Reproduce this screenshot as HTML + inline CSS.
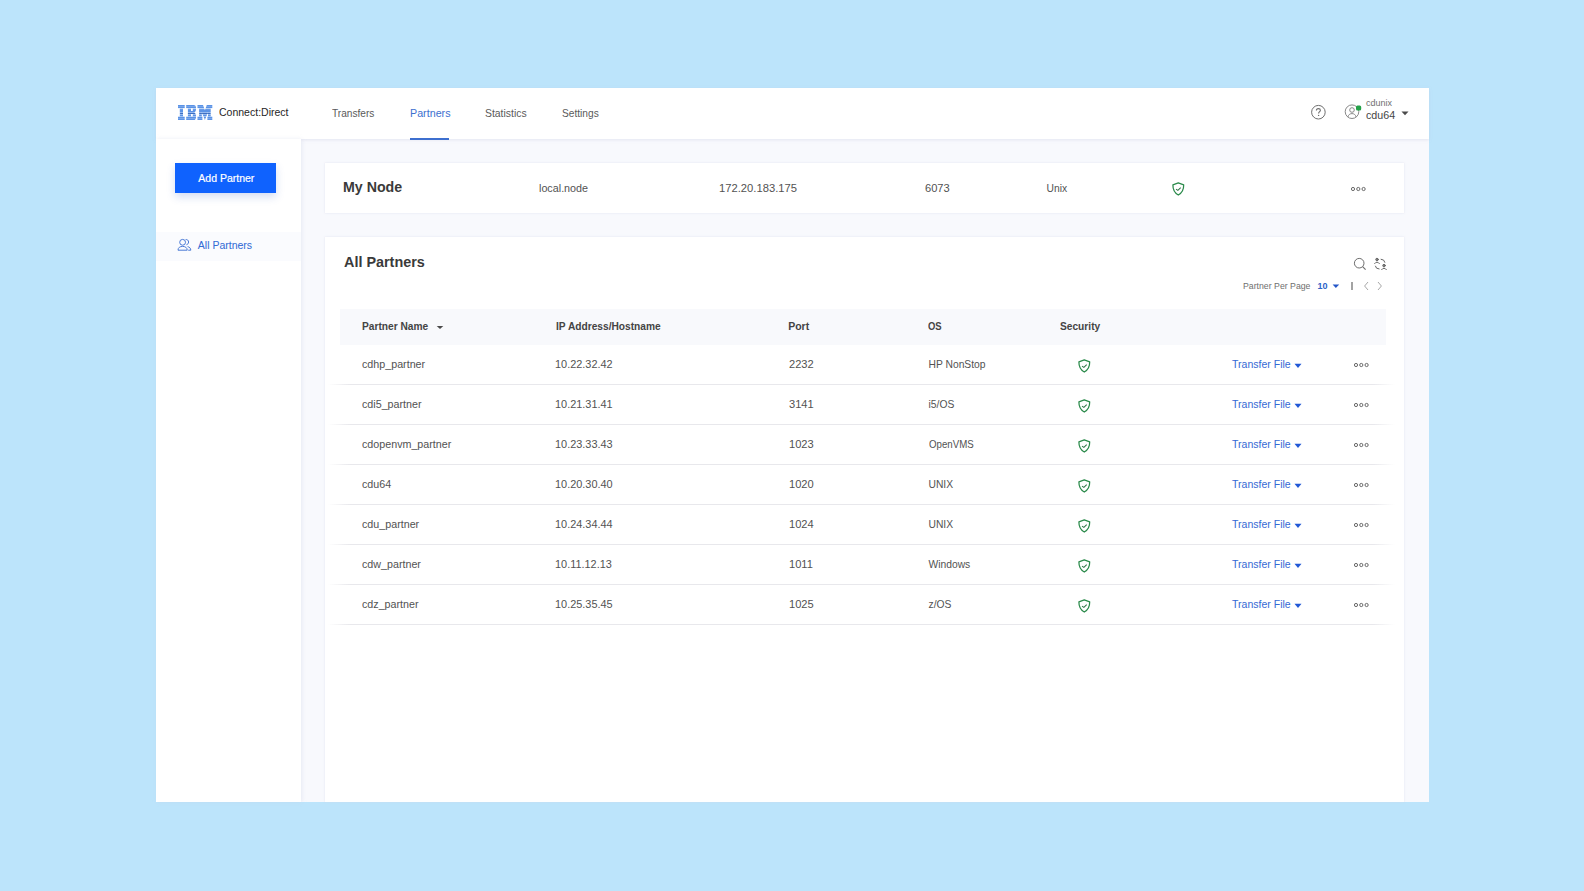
<!DOCTYPE html>
<html><head><meta charset="utf-8">
<style>
html,body{margin:0;padding:0;}
body{width:1584px;height:891px;background:#BCE4FB;position:relative;overflow:hidden;font-family:"Liberation Sans",sans-serif;}
.a{position:absolute;}
.t{position:absolute;white-space:nowrap;line-height:1;}
</style></head>
<body>
<div class="a" style="left:156px;top:88px;width:1273px;height:714px;background:#fff"></div>
<div class="a" style="left:301px;top:139px;width:1128px;height:663px;background:#F8F9FD"></div>
<div class="a" style="left:156px;top:88px;width:1273px;height:51px;background:#fff;box-shadow:0 1px 3px rgba(190,196,220,0.35)"></div>
<div class="a" style="left:156px;top:139px;width:145px;height:663px;background:#fff;box-shadow:1px 0 4px rgba(200,205,225,0.35)"></div>
<div class="a" style="left:325px;top:163px;width:1079px;height:50px;background:#fff;box-shadow:0 0 2px rgba(210,214,232,0.6)"></div>
<div class="a" style="left:325px;top:237px;width:1079px;height:565px;background:#fff;box-shadow:0 0 2px rgba(210,214,232,0.6)"></div>
<svg class="a" style="left:178px;top:105px" width="35" height="15" viewBox="0 0 35 15">
<g fill="#5B93E6" fill-rule="evenodd">
<path d="M0 0 H6.7 V3.3 H5 V11.6 H6.7 V15 H0 V11.6 H1.8 V3.3 H0 Z"/>
<path d="M8.2 0 H15.6 Q18 0 18 2.8 V4.6 Q18 6.6 16.4 7.5 Q18 8.4 18 10.4 V12.2 Q18 15 15.6 15 H8.2 V11.6 H9.9 V3.3 H8.2 Z M13 3.3 H14.8 V6 H13 Z M13 9 H14.8 V11.6 H13 Z"/>
<path d="M19.5 0 H25 L26.9 5.2 L28.8 0 H34.3 V3.3 H32.7 V11.6 H34.3 V15 H29.4 V11.6 H30 V7.2 L26.9 15 L23.8 7.2 V11.6 H24.4 V15 H19.5 V11.6 H21.1 V3.3 H19.5 Z"/>
</g>
<g fill="#fff"><rect x="0" y="3.3" width="35" height="0.8" opacity="0.85"/><rect x="0" y="7.3" width="35" height="0.6" opacity="0.6"/><rect x="0" y="9.4" width="35" height="0.6" opacity="0.6"/><rect x="0" y="11.1" width="35" height="0.6" opacity="0.75"/><rect x="0" y="13.3" width="35" height="0.5" opacity="0.4"/><rect x="0" y="1.5" width="35" height="0.5" opacity="0.35"/></g>
<g fill="#2F5FB0" opacity="0.75"><rect x="2.2" y="8.1" width="2.8" height="0.9"/><rect x="9.9" y="8.1" width="7.2" height="0.9"/><rect x="21.4" y="8.1" width="11" height="0.9"/></g>
</svg>
<div class="t" style="left:219.3px;top:107.0px;font-size:11px;color:#262626;font-weight:400;transform:scaleX(0.955);transform-origin:0 0;">Connect:Direct</div>
<div class="t" style="left:332.0px;top:108.3px;font-size:11px;color:#5a5a5a;font-weight:400;transform:scaleX(0.92);transform-origin:0 0;">Transfers</div>
<div class="t" style="left:410.0px;top:108.3px;font-size:11px;color:#3D6FCF;font-weight:400;transform:scaleX(0.975);transform-origin:0 0;">Partners</div>
<div class="a" style="left:410px;top:138px;width:39px;height:2px;background:#3D6FCF"></div>
<div class="t" style="left:484.8px;top:108.3px;font-size:11px;color:#5a5a5a;font-weight:400;transform:scaleX(0.945);transform-origin:0 0;">Statistics</div>
<div class="t" style="left:562.0px;top:108.3px;font-size:11px;color:#5a5a5a;font-weight:400;transform:scaleX(0.925);transform-origin:0 0;">Settings</div>
<svg class="a" style="left:1310px;top:104px" width="17" height="17" viewBox="0 0 17 17">
<circle cx="8.4" cy="8.2" r="6.8" fill="none" stroke="#6f6f6f" stroke-width="1"/>
<path d="M6.4 6.6 C6.4 5.3 7.3 4.6 8.4 4.6 C9.6 4.6 10.4 5.4 10.4 6.4 C10.4 7.6 8.6 7.8 8.6 9.4" fill="none" stroke="#6f6f6f" stroke-width="1.1"/>
<circle cx="8.6" cy="11.4" r="0.7" fill="#6f6f6f"/>
</svg>
<svg class="a" style="left:1343px;top:103px" width="20" height="17" viewBox="0 0 20 17">
<circle cx="9" cy="8.7" r="6.8" fill="none" stroke="#7a7a7a" stroke-width="0.9"/>
<circle cx="9" cy="7" r="2.3" fill="none" stroke="#7a7a7a" stroke-width="0.9"/>
<path d="M4.8 14 C5.6 11.6 7 10.6 9 10.6 C11 10.6 12.4 11.6 13.2 14" fill="none" stroke="#7a7a7a" stroke-width="0.9"/>
<rect x="13" y="2.4" width="5.2" height="5.2" rx="1.5" fill="#24A148"/>
</svg>
<div class="t" style="left:1366.0px;top:99.0px;font-size:9px;color:#707070;font-weight:400;">cdunix</div>
<div class="t" style="left:1366.0px;top:109.5px;font-size:10.5px;color:#454545;font-weight:400;transform:scaleX(1.02);transform-origin:0 0;">cdu64</div>
<svg class="a" style="left:1401px;top:111px" width="8" height="5" viewBox="0 0 8 5"><path d="M0.5 0.5 L7.5 0.5 L4 4.3 Z" fill="#4a4a4a"/></svg>
<div class="a" style="left:175px;top:163px;width:101px;height:30px;background:#0F62FE;box-shadow:0 4px 8px rgba(60,100,200,0.22)"></div>
<div class="t" style="left:198.3px;top:173.1px;font-size:10.5px;color:#ffffff;font-weight:400;-webkit-text-stroke:0.2px #fff;">Add Partner</div>
<div class="a" style="left:156px;top:232px;width:145px;height:29px;background:#FAFBFE"></div>
<svg class="a" style="left:177px;top:238px" width="15" height="14" viewBox="0 0 15 14">
<circle cx="5.6" cy="4.3" r="2.9" fill="none" stroke="#4A7AD6" stroke-width="1"/>
<path d="M1 12.2 C1 9.6 3 8.4 5.6 8.4 C8.2 8.4 10.2 9.6 10.2 12.2 Z" fill="none" stroke="#4A7AD6" stroke-width="1"/>
<path d="M8.6 1.6 C10.2 1.2 11.6 2.4 11.6 4 C11.6 5.4 10.6 6.5 9.4 6.8" fill="none" stroke="#4A7AD6" stroke-width="1"/>
<path d="M10.6 8.6 C12.4 9 13.8 10.2 13.8 12.2 L11.2 12.2" fill="none" stroke="#4A7AD6" stroke-width="1"/>
</svg>
<div class="t" style="left:197.8px;top:240.2px;font-size:10.5px;color:#346CD6;font-weight:400;-webkit-text-stroke:0.05px #346CD6;">All Partners</div>
<div class="t" style="left:342.6px;top:179.2px;font-size:15px;color:#3a3a3a;font-weight:700;transform:scaleX(0.947);transform-origin:0 0;">My Node</div>
<div class="t" style="left:538.8px;top:183.7px;font-size:10.3px;color:#525252;font-weight:400;transform:scaleX(1.045);transform-origin:0 0;">local.node</div>
<div class="t" style="left:719.2px;top:184.0px;font-size:10.3px;color:#525252;font-weight:400;transform:scaleX(1.09);transform-origin:0 0;">172.20.183.175</div>
<div class="t" style="left:924.6px;top:184.0px;font-size:10.3px;color:#525252;font-weight:400;transform:scaleX(1.08);transform-origin:0 0;">6073</div>
<div class="t" style="left:1046.5px;top:184.0px;font-size:10.3px;color:#525252;font-weight:400;">Unix</div>
<svg class="a" style="left:1171px;top:182px" width="14" height="14" viewBox="0 0 14 14">
<path d="M7.3 0.8 L12.7 2.8 C12.8 7.6 11 11 7.3 13 C3.6 11 1.8 7.6 1.9 2.8 Z" fill="none" stroke="#2A8A4A" stroke-width="1.25" stroke-linejoin="round"/>
<path d="M5 7.1 L6.9 8.4 L9.7 5.7" fill="none" stroke="#2F7447" stroke-width="1.05"/>
</svg>
<svg class="a" style="left:1350px;top:186px" width="18" height="6" viewBox="0 0 18 6">
<circle cx="3" cy="3" r="1.6" fill="none" stroke="#6a6a6a" stroke-width="1"/>
<circle cx="8.3" cy="3" r="1.6" fill="none" stroke="#6a6a6a" stroke-width="1"/>
<circle cx="13.6" cy="3" r="1.6" fill="none" stroke="#6a6a6a" stroke-width="1"/>
</svg>
<div class="t" style="left:343.6px;top:253.9px;font-size:15px;color:#3a3a3a;font-weight:700;transform:scaleX(0.96);transform-origin:0 0;">All Partners</div>
<svg class="a" style="left:1353px;top:257px" width="14" height="14" viewBox="0 0 14 14">
<circle cx="6.2" cy="6.2" r="4.8" fill="none" stroke="#6f6f6f" stroke-width="1"/>
<path d="M9.6 9.6 L12.6 12.6" stroke="#6f6f6f" stroke-width="1.1"/>
</svg>
<svg class="a" style="left:1373px;top:257px" width="15" height="15" viewBox="0 0 15 15">
<g fill="none" stroke="#666" stroke-width="1" stroke-linecap="round">
<circle cx="4" cy="2.5" r="1.25" fill="#888"/>
<path d="M1.6 6.6 Q4 3.4 6.4 6.6"/>
<path d="M8.1 2.2 Q11.4 2.3 11.9 5.3"/>
<path d="M2.4 9.2 Q2.7 11.9 6.1 12"/>
<circle cx="11" cy="8.6" r="1.25" fill="#888"/>
<path d="M8.6 12.7 Q11 9.5 13.4 12.7"/>
</g>
</svg>
<div class="t" style="left:1242.9px;top:281.7px;font-size:9px;color:#6f6f6f;font-weight:400;transform:scaleX(0.97);transform-origin:0 0;">Partner Per Page</div>
<div class="t" style="left:1317.5px;top:281.7px;font-size:9px;color:#2D62C8;font-weight:700;">10</div>
<svg class="a" style="left:1332px;top:284px" width="8" height="5" viewBox="0 0 8 5"><path d="M0.6 0.6 L7.2 0.6 L3.9 4 Z" fill="#2456C8"/></svg>
<div class="a" style="left:1351px;top:282px;width:1.5px;height:8px;background:#a3a3a3"></div>
<svg class="a" style="left:1362px;top:281px" width="22" height="10" viewBox="0 0 22 10"><path d="M6 1 L2.6 5 L6 9" fill="none" stroke="#a8a8a8" stroke-width="1"/><path d="M16 1 L19.4 5 L16 9" fill="none" stroke="#a8a8a8" stroke-width="1"/></svg>
<div class="a" style="left:340px;top:309px;width:1046px;height:36px;background:#F8F9FC"></div>
<div class="t" style="left:361.5px;top:321.4px;font-size:10.5px;color:#444444;font-weight:700;transform:scaleX(0.97);transform-origin:0 0;">Partner Name</div>
<svg class="a" style="left:436px;top:325px" width="8" height="5" viewBox="0 0 8 5"><path d="M0.7 0.9 L7.3 0.9 L4 4.1 Z" fill="#4a4a4a"/></svg>
<div class="t" style="left:555.7px;top:321.4px;font-size:10.5px;color:#444444;font-weight:700;transform:scaleX(0.97);transform-origin:0 0;">IP Address/Hostname</div>
<div class="t" style="left:788.2px;top:321.4px;font-size:10.5px;color:#444444;font-weight:700;">Port</div>
<div class="t" style="left:928.2px;top:321.4px;font-size:10.5px;color:#444444;font-weight:700;transform:scaleX(0.9);transform-origin:0 0;">OS</div>
<div class="t" style="left:1060.4px;top:321.4px;font-size:10.5px;color:#444444;font-weight:700;transform:scaleX(0.97);transform-origin:0 0;">Security</div>
<div class="t" style="left:362.3px;top:360.0px;font-size:10.3px;color:#525252;font-weight:400;transform:scaleX(1.04);transform-origin:0 0;">cdhp_partner</div>
<div class="t" style="left:554.6px;top:360.0px;font-size:10.3px;color:#525252;font-weight:400;transform:scaleX(1.06);transform-origin:0 0;">10.22.32.42</div>
<div class="t" style="left:788.5px;top:360.0px;font-size:10.3px;color:#525252;font-weight:400;transform:scaleX(1.08);transform-origin:0 0;">2232</div>
<div class="t" style="left:928.5px;top:360.0px;font-size:10.3px;color:#525252;font-weight:400;">HP NonStop</div>
<svg class="a" style="left:1077.2px;top:358.6px" width="14" height="14" viewBox="0 0 14 14">
<path d="M7.3 0.8 L12.7 2.8 C12.8 7.6 11 11 7.3 13 C3.6 11 1.8 7.6 1.9 2.8 Z" fill="none" stroke="#2A8A4A" stroke-width="1.25" stroke-linejoin="round"/>
<path d="M5 7.1 L6.9 8.4 L9.7 5.7" fill="none" stroke="#2F7447" stroke-width="1.05"/>
</svg>
<div class="t" style="left:1232.1px;top:358.8px;font-size:10.5px;color:#3469D4;font-weight:400;">Transfer File</div>
<svg class="a" style="left:1293.5px;top:363px" width="8" height="6" viewBox="0 0 8 6"><path d="M0.5 0.8 L7.5 0.8 L4 5 Z" fill="#2158D6"/></svg>
<svg class="a" style="left:1353.0px;top:362.2px" width="18" height="6" viewBox="0 0 18 6">
<circle cx="3" cy="3" r="1.6" fill="none" stroke="#6a6a6a" stroke-width="1"/>
<circle cx="8.3" cy="3" r="1.6" fill="none" stroke="#6a6a6a" stroke-width="1"/>
<circle cx="13.6" cy="3" r="1.6" fill="none" stroke="#6a6a6a" stroke-width="1"/>
</svg>
<div class="a" style="left:328px;top:384px;width:1067px;height:1px;background:linear-gradient(90deg, rgba(232,232,236,0) 0px, #E8E8EC 22px, #E8E8EC 1045px, rgba(232,232,236,0) 1067px)"></div>
<div class="t" style="left:362.3px;top:400.0px;font-size:10.3px;color:#525252;font-weight:400;transform:scaleX(1.04);transform-origin:0 0;">cdi5_partner</div>
<div class="t" style="left:554.6px;top:400.0px;font-size:10.3px;color:#525252;font-weight:400;transform:scaleX(1.06);transform-origin:0 0;">10.21.31.41</div>
<div class="t" style="left:788.5px;top:400.0px;font-size:10.3px;color:#525252;font-weight:400;transform:scaleX(1.08);transform-origin:0 0;">3141</div>
<div class="t" style="left:928.5px;top:400.0px;font-size:10.3px;color:#525252;font-weight:400;">i5/OS</div>
<svg class="a" style="left:1077.2px;top:398.6px" width="14" height="14" viewBox="0 0 14 14">
<path d="M7.3 0.8 L12.7 2.8 C12.8 7.6 11 11 7.3 13 C3.6 11 1.8 7.6 1.9 2.8 Z" fill="none" stroke="#2A8A4A" stroke-width="1.25" stroke-linejoin="round"/>
<path d="M5 7.1 L6.9 8.4 L9.7 5.7" fill="none" stroke="#2F7447" stroke-width="1.05"/>
</svg>
<div class="t" style="left:1232.1px;top:398.8px;font-size:10.5px;color:#3469D4;font-weight:400;">Transfer File</div>
<svg class="a" style="left:1293.5px;top:403px" width="8" height="6" viewBox="0 0 8 6"><path d="M0.5 0.8 L7.5 0.8 L4 5 Z" fill="#2158D6"/></svg>
<svg class="a" style="left:1353.0px;top:402.2px" width="18" height="6" viewBox="0 0 18 6">
<circle cx="3" cy="3" r="1.6" fill="none" stroke="#6a6a6a" stroke-width="1"/>
<circle cx="8.3" cy="3" r="1.6" fill="none" stroke="#6a6a6a" stroke-width="1"/>
<circle cx="13.6" cy="3" r="1.6" fill="none" stroke="#6a6a6a" stroke-width="1"/>
</svg>
<div class="a" style="left:328px;top:424px;width:1067px;height:1px;background:linear-gradient(90deg, rgba(232,232,236,0) 0px, #E8E8EC 22px, #E8E8EC 1045px, rgba(232,232,236,0) 1067px)"></div>
<div class="t" style="left:362.3px;top:440.0px;font-size:10.3px;color:#525252;font-weight:400;transform:scaleX(1.04);transform-origin:0 0;">cdopenvm_partner</div>
<div class="t" style="left:554.6px;top:440.0px;font-size:10.3px;color:#525252;font-weight:400;transform:scaleX(1.06);transform-origin:0 0;">10.23.33.43</div>
<div class="t" style="left:788.5px;top:440.0px;font-size:10.3px;color:#525252;font-weight:400;transform:scaleX(1.08);transform-origin:0 0;">1023</div>
<div class="t" style="left:928.5px;top:440.0px;font-size:10.3px;color:#525252;font-weight:400;transform:scaleX(0.94);transform-origin:0 0;">OpenVMS</div>
<svg class="a" style="left:1077.2px;top:438.6px" width="14" height="14" viewBox="0 0 14 14">
<path d="M7.3 0.8 L12.7 2.8 C12.8 7.6 11 11 7.3 13 C3.6 11 1.8 7.6 1.9 2.8 Z" fill="none" stroke="#2A8A4A" stroke-width="1.25" stroke-linejoin="round"/>
<path d="M5 7.1 L6.9 8.4 L9.7 5.7" fill="none" stroke="#2F7447" stroke-width="1.05"/>
</svg>
<div class="t" style="left:1232.1px;top:438.8px;font-size:10.5px;color:#3469D4;font-weight:400;">Transfer File</div>
<svg class="a" style="left:1293.5px;top:443px" width="8" height="6" viewBox="0 0 8 6"><path d="M0.5 0.8 L7.5 0.8 L4 5 Z" fill="#2158D6"/></svg>
<svg class="a" style="left:1353.0px;top:442.2px" width="18" height="6" viewBox="0 0 18 6">
<circle cx="3" cy="3" r="1.6" fill="none" stroke="#6a6a6a" stroke-width="1"/>
<circle cx="8.3" cy="3" r="1.6" fill="none" stroke="#6a6a6a" stroke-width="1"/>
<circle cx="13.6" cy="3" r="1.6" fill="none" stroke="#6a6a6a" stroke-width="1"/>
</svg>
<div class="a" style="left:328px;top:464px;width:1067px;height:1px;background:linear-gradient(90deg, rgba(232,232,236,0) 0px, #E8E8EC 22px, #E8E8EC 1045px, rgba(232,232,236,0) 1067px)"></div>
<div class="t" style="left:362.3px;top:480.0px;font-size:10.3px;color:#525252;font-weight:400;transform:scaleX(1.04);transform-origin:0 0;">cdu64</div>
<div class="t" style="left:554.6px;top:480.0px;font-size:10.3px;color:#525252;font-weight:400;transform:scaleX(1.06);transform-origin:0 0;">10.20.30.40</div>
<div class="t" style="left:788.5px;top:480.0px;font-size:10.3px;color:#525252;font-weight:400;transform:scaleX(1.08);transform-origin:0 0;">1020</div>
<div class="t" style="left:928.5px;top:480.0px;font-size:10.3px;color:#525252;font-weight:400;">UNIX</div>
<svg class="a" style="left:1077.2px;top:478.6px" width="14" height="14" viewBox="0 0 14 14">
<path d="M7.3 0.8 L12.7 2.8 C12.8 7.6 11 11 7.3 13 C3.6 11 1.8 7.6 1.9 2.8 Z" fill="none" stroke="#2A8A4A" stroke-width="1.25" stroke-linejoin="round"/>
<path d="M5 7.1 L6.9 8.4 L9.7 5.7" fill="none" stroke="#2F7447" stroke-width="1.05"/>
</svg>
<div class="t" style="left:1232.1px;top:478.8px;font-size:10.5px;color:#3469D4;font-weight:400;">Transfer File</div>
<svg class="a" style="left:1293.5px;top:483px" width="8" height="6" viewBox="0 0 8 6"><path d="M0.5 0.8 L7.5 0.8 L4 5 Z" fill="#2158D6"/></svg>
<svg class="a" style="left:1353.0px;top:482.2px" width="18" height="6" viewBox="0 0 18 6">
<circle cx="3" cy="3" r="1.6" fill="none" stroke="#6a6a6a" stroke-width="1"/>
<circle cx="8.3" cy="3" r="1.6" fill="none" stroke="#6a6a6a" stroke-width="1"/>
<circle cx="13.6" cy="3" r="1.6" fill="none" stroke="#6a6a6a" stroke-width="1"/>
</svg>
<div class="a" style="left:328px;top:504px;width:1067px;height:1px;background:linear-gradient(90deg, rgba(232,232,236,0) 0px, #E8E8EC 22px, #E8E8EC 1045px, rgba(232,232,236,0) 1067px)"></div>
<div class="t" style="left:362.3px;top:520.0px;font-size:10.3px;color:#525252;font-weight:400;transform:scaleX(1.04);transform-origin:0 0;">cdu_partner</div>
<div class="t" style="left:554.6px;top:520.0px;font-size:10.3px;color:#525252;font-weight:400;transform:scaleX(1.06);transform-origin:0 0;">10.24.34.44</div>
<div class="t" style="left:788.5px;top:520.0px;font-size:10.3px;color:#525252;font-weight:400;transform:scaleX(1.08);transform-origin:0 0;">1024</div>
<div class="t" style="left:928.5px;top:520.0px;font-size:10.3px;color:#525252;font-weight:400;">UNIX</div>
<svg class="a" style="left:1077.2px;top:518.6px" width="14" height="14" viewBox="0 0 14 14">
<path d="M7.3 0.8 L12.7 2.8 C12.8 7.6 11 11 7.3 13 C3.6 11 1.8 7.6 1.9 2.8 Z" fill="none" stroke="#2A8A4A" stroke-width="1.25" stroke-linejoin="round"/>
<path d="M5 7.1 L6.9 8.4 L9.7 5.7" fill="none" stroke="#2F7447" stroke-width="1.05"/>
</svg>
<div class="t" style="left:1232.1px;top:518.8px;font-size:10.5px;color:#3469D4;font-weight:400;">Transfer File</div>
<svg class="a" style="left:1293.5px;top:523px" width="8" height="6" viewBox="0 0 8 6"><path d="M0.5 0.8 L7.5 0.8 L4 5 Z" fill="#2158D6"/></svg>
<svg class="a" style="left:1353.0px;top:522.2px" width="18" height="6" viewBox="0 0 18 6">
<circle cx="3" cy="3" r="1.6" fill="none" stroke="#6a6a6a" stroke-width="1"/>
<circle cx="8.3" cy="3" r="1.6" fill="none" stroke="#6a6a6a" stroke-width="1"/>
<circle cx="13.6" cy="3" r="1.6" fill="none" stroke="#6a6a6a" stroke-width="1"/>
</svg>
<div class="a" style="left:328px;top:544px;width:1067px;height:1px;background:linear-gradient(90deg, rgba(232,232,236,0) 0px, #E8E8EC 22px, #E8E8EC 1045px, rgba(232,232,236,0) 1067px)"></div>
<div class="t" style="left:362.3px;top:560.0px;font-size:10.3px;color:#525252;font-weight:400;transform:scaleX(1.04);transform-origin:0 0;">cdw_partner</div>
<div class="t" style="left:554.6px;top:560.0px;font-size:10.3px;color:#525252;font-weight:400;transform:scaleX(1.06);transform-origin:0 0;">10.11.12.13</div>
<div class="t" style="left:788.5px;top:560.0px;font-size:10.3px;color:#525252;font-weight:400;transform:scaleX(1.08);transform-origin:0 0;">1011</div>
<div class="t" style="left:928.5px;top:560.0px;font-size:10.3px;color:#525252;font-weight:400;">Windows</div>
<svg class="a" style="left:1077.2px;top:558.6px" width="14" height="14" viewBox="0 0 14 14">
<path d="M7.3 0.8 L12.7 2.8 C12.8 7.6 11 11 7.3 13 C3.6 11 1.8 7.6 1.9 2.8 Z" fill="none" stroke="#2A8A4A" stroke-width="1.25" stroke-linejoin="round"/>
<path d="M5 7.1 L6.9 8.4 L9.7 5.7" fill="none" stroke="#2F7447" stroke-width="1.05"/>
</svg>
<div class="t" style="left:1232.1px;top:558.8px;font-size:10.5px;color:#3469D4;font-weight:400;">Transfer File</div>
<svg class="a" style="left:1293.5px;top:563px" width="8" height="6" viewBox="0 0 8 6"><path d="M0.5 0.8 L7.5 0.8 L4 5 Z" fill="#2158D6"/></svg>
<svg class="a" style="left:1353.0px;top:562.2px" width="18" height="6" viewBox="0 0 18 6">
<circle cx="3" cy="3" r="1.6" fill="none" stroke="#6a6a6a" stroke-width="1"/>
<circle cx="8.3" cy="3" r="1.6" fill="none" stroke="#6a6a6a" stroke-width="1"/>
<circle cx="13.6" cy="3" r="1.6" fill="none" stroke="#6a6a6a" stroke-width="1"/>
</svg>
<div class="a" style="left:328px;top:584px;width:1067px;height:1px;background:linear-gradient(90deg, rgba(232,232,236,0) 0px, #E8E8EC 22px, #E8E8EC 1045px, rgba(232,232,236,0) 1067px)"></div>
<div class="t" style="left:362.3px;top:600.0px;font-size:10.3px;color:#525252;font-weight:400;transform:scaleX(1.04);transform-origin:0 0;">cdz_partner</div>
<div class="t" style="left:554.6px;top:600.0px;font-size:10.3px;color:#525252;font-weight:400;transform:scaleX(1.06);transform-origin:0 0;">10.25.35.45</div>
<div class="t" style="left:788.5px;top:600.0px;font-size:10.3px;color:#525252;font-weight:400;transform:scaleX(1.08);transform-origin:0 0;">1025</div>
<div class="t" style="left:928.5px;top:600.0px;font-size:10.3px;color:#525252;font-weight:400;">z/OS</div>
<svg class="a" style="left:1077.2px;top:598.6px" width="14" height="14" viewBox="0 0 14 14">
<path d="M7.3 0.8 L12.7 2.8 C12.8 7.6 11 11 7.3 13 C3.6 11 1.8 7.6 1.9 2.8 Z" fill="none" stroke="#2A8A4A" stroke-width="1.25" stroke-linejoin="round"/>
<path d="M5 7.1 L6.9 8.4 L9.7 5.7" fill="none" stroke="#2F7447" stroke-width="1.05"/>
</svg>
<div class="t" style="left:1232.1px;top:598.8px;font-size:10.5px;color:#3469D4;font-weight:400;">Transfer File</div>
<svg class="a" style="left:1293.5px;top:603px" width="8" height="6" viewBox="0 0 8 6"><path d="M0.5 0.8 L7.5 0.8 L4 5 Z" fill="#2158D6"/></svg>
<svg class="a" style="left:1353.0px;top:602.2px" width="18" height="6" viewBox="0 0 18 6">
<circle cx="3" cy="3" r="1.6" fill="none" stroke="#6a6a6a" stroke-width="1"/>
<circle cx="8.3" cy="3" r="1.6" fill="none" stroke="#6a6a6a" stroke-width="1"/>
<circle cx="13.6" cy="3" r="1.6" fill="none" stroke="#6a6a6a" stroke-width="1"/>
</svg>
<div class="a" style="left:328px;top:624px;width:1067px;height:1px;background:linear-gradient(90deg, rgba(232,232,236,0) 0px, #E8E8EC 22px, #E8E8EC 1045px, rgba(232,232,236,0) 1067px)"></div>
</body></html>
